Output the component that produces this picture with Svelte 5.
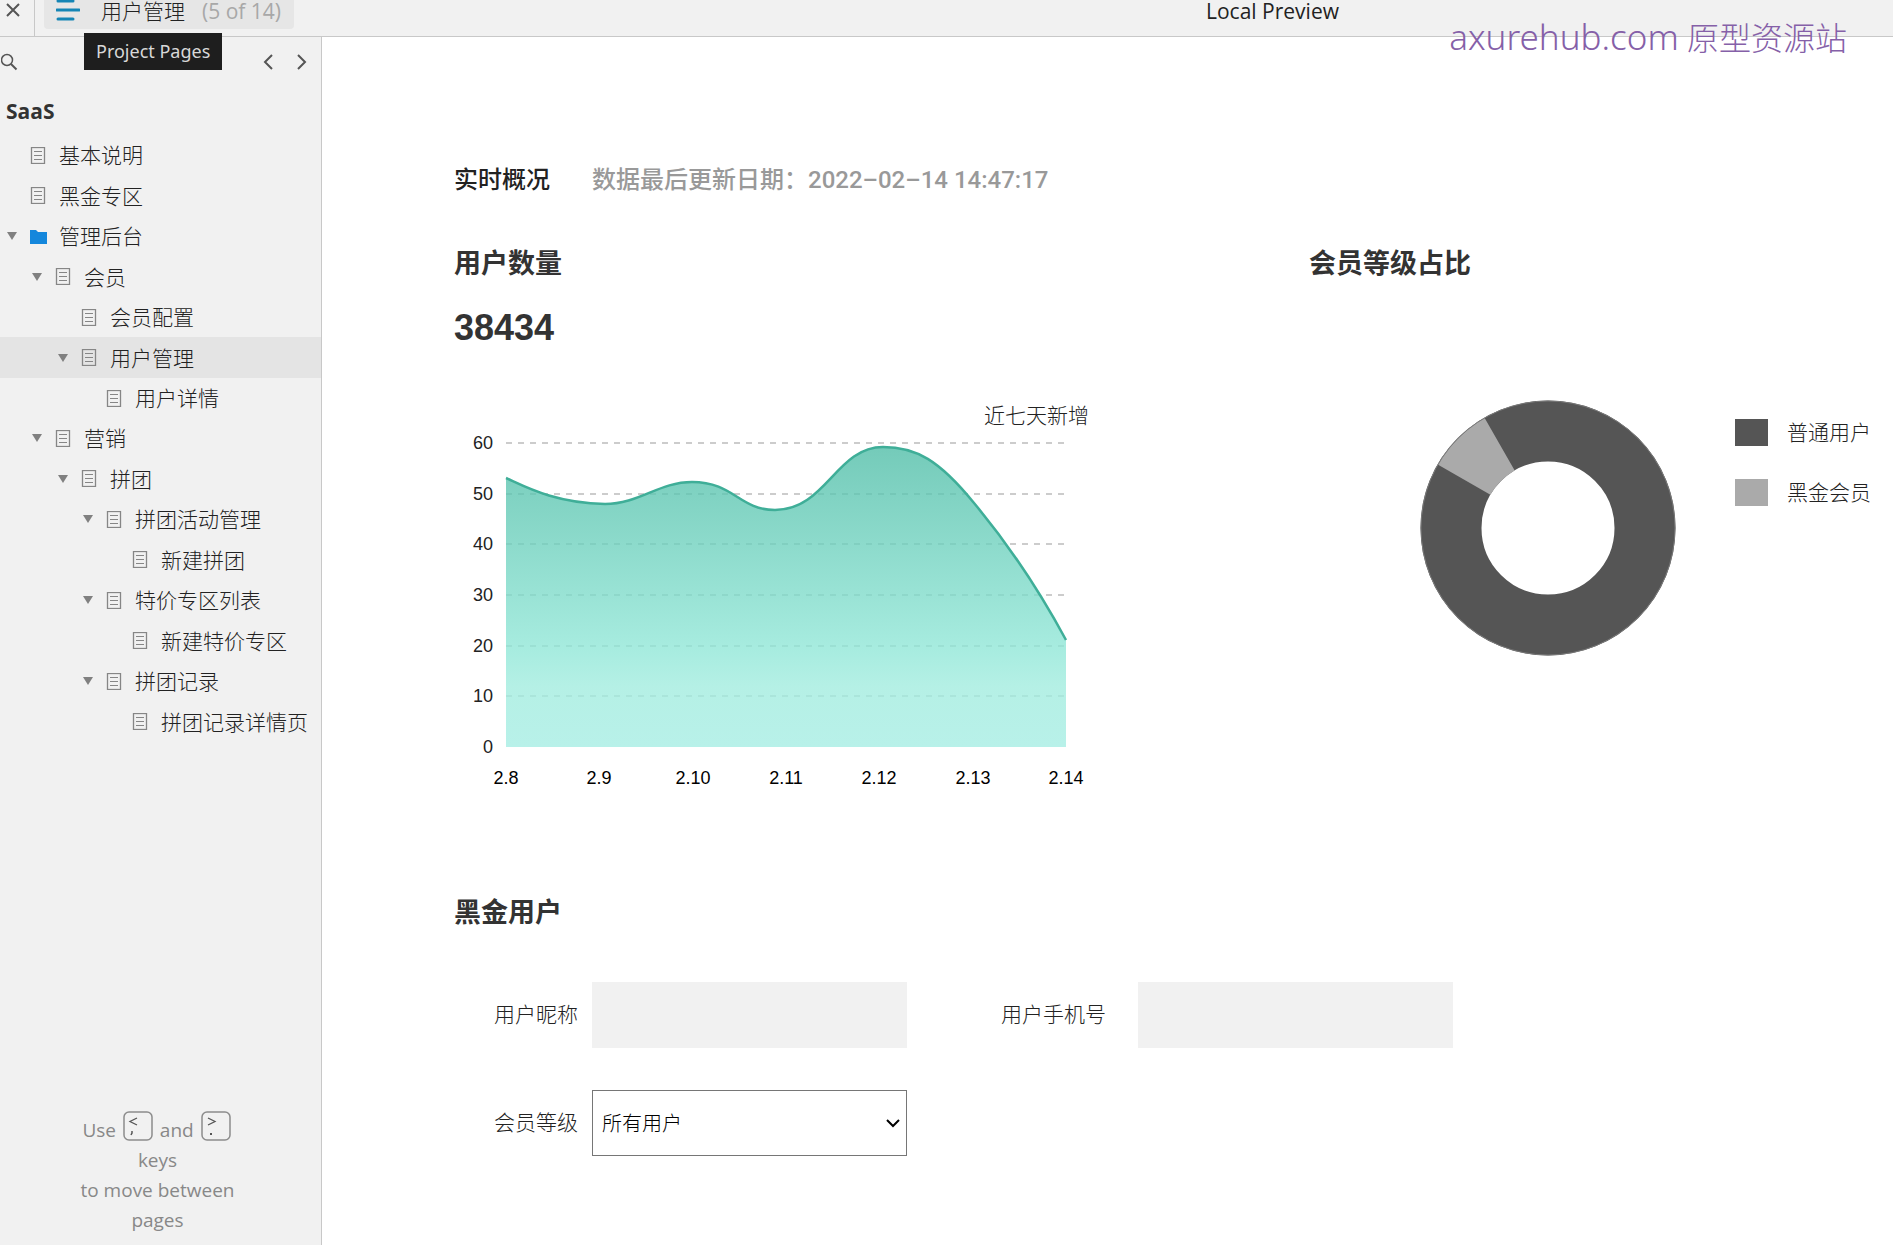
<script lang="ts">
    type Page = { name: string; level: number; open?: boolean; folder?: boolean };

    const pages: Page[] = [
        { name: '基本说明', level: 0 },
        { name: '黑金专区', level: 0 },
        { name: '管理后台', level: 0, open: true, folder: true },
        { name: '会员', level: 1, open: true },
        { name: '会员配置', level: 2 },
        { name: '用户管理', level: 2, open: true },
        { name: '用户详情', level: 3 },
        { name: '营销', level: 1, open: true },
        { name: '拼团', level: 2, open: true },
        { name: '拼团活动管理', level: 3, open: true },
        { name: '新建拼团', level: 4 },
        { name: '特价专区列表', level: 3, open: true },
        { name: '新建特价专区', level: 4 },
        { name: '拼团记录', level: 3, open: true },
        { name: '拼团记录详情页', level: 4 }
    ];

    const days = ['2.8', '2.9', '2.10', '2.11', '2.12', '2.13', '2.14'];
    const ticks = [60, 50, 40, 30, 20, 10, 0];
    const curve =
        'M52 78C70 86 100 103 151 104C185 104 205 82 238 82C280 82 285 110 321 110C372 110 382 47 429 47C462 47 485 60 520 103C555 145 585 190 612 240';

    const legend = [
        { label: '普通用户', color: '#555555' },
        { label: '黑金会员', color: '#aaaaaa' }
    ];

    let current = $state(5);
    let nickname = $state('');
    let phone = $state('');
    let grade = $state('all');

    // position of a value on the chart's y axis
    function yPos(value: number) {
        return Math.round(347 - (value / 60) * 304);
    }

    function xPos(index: number) {
        return Math.round(52 + (index * 560) / 6);
    }

    function indent(level: number) {
        return Math.round(level * 25.4) + 6;
    }

    function step(delta: number) {
        current = Math.min(pages.length - 1, Math.max(0, current + delta));
    }
</script>

<div class="app">
    <header class="topbar">
        <button class="close" aria-label="Close">
            <svg width="14" height="14" viewBox="0 0 14 14">
                <path d="M1 1L13 13M13 1L1 13" stroke="#555" stroke-width="2" />
            </svg>
        </button>
        <button class="current-page">
            <svg class="menu-icon" width="24" height="24" viewBox="0 0 24 24">
                <path d="M2 3H17M1 12H23M2 21H17" stroke="#1585b5" stroke-width="3" stroke-linecap="round" />
            </svg>
            <span>用户管理</span>
            <span class="count">(5 of 14)</span>
        </button>
        <span class="preview">Local Preview</span>
        <div class="tooltip">Project Pages</div>
        <div class="watermark"><span class="domain">axurehub.com</span> 原型资源站</div>
    </header>

    <div class="body">
        <aside class="sidebar">
            <div class="tools">
                <button aria-label="Search">
                    <svg width="18" height="18" viewBox="0 0 18 18" fill="none" stroke="#555">
                        <circle cx="6" cy="7" r="5.500" stroke-width="1.500" />
                        <path d="M10 11L15.500 16.500" stroke-width="2" />
                    </svg>
                </button>
                <div class="arrows">
                    <button aria-label="Previous page" onclick={() => step(-1)}>
                        <svg width="12" height="18" viewBox="0 0 12 18" fill="none" stroke="#555" stroke-width="2">
                            <path d="M9 2L2 9L9 16" />
                        </svg>
                    </button>
                    <button aria-label="Next page" onclick={() => step(1)}>
                        <svg width="12" height="18" viewBox="0 0 12 18" fill="none" stroke="#555" stroke-width="2">
                            <path d="M3 2L10 9L3 16" />
                        </svg>
                    </button>
                </div>
            </div>
            <h2>SaaS</h2>
            <ul class="tree">
                {#each pages as page, i}
                    <li class:active={i === current}>
                        <button style="padding-left: {indent(page.level)}px" onclick={() => (current = i)}>
                            <svg class="caret" width="12" height="8" viewBox="0 0 12 8">
                                {#if page.open}
                                    <path d="M1 0H11L6 8Z" fill="#808080" />
                                {/if}
                            </svg>
                            {#if page.folder}
                                <svg width="17" height="17" viewBox="0 0 17 17">
                                    <path d="M0 2H6L8 4H17V16H0Z" fill="#1487dc" />
                                </svg>
                            {:else}
                                <svg width="17" height="17" viewBox="0 0 17 17" fill="none" stroke="#868686">
                                    <rect x="1.500" y=".5" width="13" height="16" stroke-width="1.300" />
                                    <path d="M4 4.500H12M4 8.500H12M4 12.500H12" />
                                </svg>
                            {/if}
                            <span>{page.name}</span>
                        </button>
                    </li>
                {/each}
            </ul>
            <p class="hint">
                Use
                <svg width="30" height="30" viewBox="0 0 30 30">
                    <rect x="1" y="1" width="28" height="28" rx="5" fill="none" stroke="#8c8c8c" stroke-width="1.500" />
                    <path d="M14 7L7 10.500L14 14" fill="none" stroke="#555" stroke-width="1.300" />
                    <path d="M9 20V22L8 24" fill="none" stroke="#555" stroke-width="1.500" />
                </svg>
                and
                <svg width="30" height="30" viewBox="0 0 30 30">
                    <rect x="1" y="1" width="28" height="28" rx="5" fill="none" stroke="#8c8c8c" stroke-width="1.500" />
                    <path d="M7 7L14 10.500L7 14" fill="none" stroke="#555" stroke-width="1.300" />
                    <rect x="9" y="22" width="2" height="2" fill="#555" />
                </svg>
                <br />keys<br />to move between<br />pages
            </p>
        </aside>

        <main>
            <div class="overview">
                <span>实时概况</span>
                <span class="updated">数据最后更新日期：2022–02–14 14:47:17</span>
            </div>

            <div class="stats">
                <section>
                    <h3>用户数量</h3>
                    <div class="total">38434</div>
                    <svg class="chart" width="640" height="396" viewBox="0 0 640 396">
                        <defs>
                            <linearGradient id="area" x1="0" y1="0" x2="0" y2="1">
                                <stop offset="0" stop-color="#4dbca6" />
                                <stop offset=".35" stop-color="#6fd2bf" />
                                <stop offset=".68" stop-color="#8fe7d7" />
                                <stop offset=".8" stop-color="#a0ecde" />
                                <stop offset="1" stop-color="#a4ede3" />
                            </linearGradient>
                        </defs>
                        <text class="caption" x="635" y="23" text-anchor="end">近七天新增</text>
                        {#each ticks as tick}
                            <text class="axis" x="39" y={yPos(tick) + 6} text-anchor="end">{tick}</text>
                            {#if tick > 0}
                                <line x1="52" x2="612" y1={yPos(tick)} y2={yPos(tick)} class="grid-line" />
                            {/if}
                        {/each}
                        <path d="{curve}V347H52Z" fill="url(#area)" fill-opacity=".78" />
                        <path d={curve} fill="none" stroke="#3fae98" stroke-width="2.500" />
                        {#each days as day, i}
                            <text class="axis day" x={xPos(i)} y="384" text-anchor="middle">{day}</text>
                        {/each}
                    </svg>
                </section>

                <section>
                    <h3>会员等级占比</h3>
                    <div class="share">
                        <svg width="256" height="256" viewBox="-128 -128 256 256">
                            <circle r="97" fill="none" stroke="#555" stroke-width="61" />
                            <path d="M-110.300 -63.500A127 127 0 0 1 -63.500 -110.300L-33.300 -57.600A66.500 66.500 0 0 0 -57.600 -33.300Z" fill="#aaa" />
                            <circle r="127" fill="none" stroke="#797979" />
                        </svg>
                        <ul class="legend">
                            {#each legend as item}
                                <li>
                                    <i style="background: {item.color}"></i>
                                    <span>{item.label}</span>
                                </li>
                            {/each}
                        </ul>
                    </div>
                </section>
            </div>

            <h3 class="form-title">黑金用户</h3>
            <form class="filters">
                <label for="nickname">用户昵称</label>
                <input id="nickname" type="text" bind:value={nickname} />
                <label for="phone" class="second">用户手机号</label>
                <input id="phone" type="text" bind:value={phone} />
                <label for="grade">会员等级</label>
                <div class="select">
                    <select id="grade" bind:value={grade}>
                        <option value="all">所有用户</option>
                        <option value="normal">普通用户</option>
                        <option value="gold">黑金会员</option>
                    </select>
                    <svg width="14" height="9" viewBox="0 0 14 9">
                        <path d="M1 1L7 7L13 1" fill="none" stroke="#000" stroke-width="2" />
                    </svg>
                </div>
            </form>
        </main>
    </div>
</div>

<style>
    :global(body) {
        margin: 0;
    }

    .app {
        display: flex;
        flex-direction: column;
        min-height: 100vh;
        background: #fff;
        color: #222;
        font-family: 'Open Sans', 'Noto Sans CJK SC', sans-serif;
        font-size: 21px;
        font-weight: 300;
    }

    button {
        padding: 0;
        border: none;
        background: none;
        color: inherit;
        font: inherit;
        cursor: pointer;
    }

    svg {
        display: block;
        flex: none;
    }

    ul {
        margin: 0;
        padding: 0;
        list-style: none;
    }

    .topbar {
        position: relative;
        display: flex;
        align-items: flex-start;
        height: 36px;
        border-bottom: 1px solid #c8c8c8;
        background: #f1f1f1;
    }

    .close {
        width: 35px;
        height: 36px;
        padding: 3px 0 0 6px;
        box-sizing: border-box;
        border-right: 1px solid #c8c8c8;
        display: flex;
    }

    .current-page {
        display: flex;
        align-items: center;
        width: 250px;
        height: 29px;
        margin-left: 9px;
        padding: 0 0 6px 12px;
        box-sizing: border-box;
        border-radius: 0 0 4px 4px;
        background: #e6e6e6;
        line-height: 23px;
        white-space: nowrap;
    }

    .menu-icon {
        margin: -3px 21px 0 0;
    }

    .count {
        margin-left: 17px;
        color: #a8a8a8;
        font-weight: 400;
    }

    .preview {
        margin-left: 912px;
        font-weight: 400;
        line-height: 23px;
    }

    .tooltip {
        position: absolute;
        top: 33px;
        left: 84px;
        padding: 0 12px;
        background: #1e1e1e;
        color: #d8d8d8;
        font-family: 'Noto Sans', sans-serif;
        font-size: 18px;
        font-weight: 400;
        line-height: 37px;
        z-index: 2;
    }

    .watermark {
        position: absolute;
        top: 14px;
        right: 46px;
        color: #8560a8;
        font-family: 'Noto Sans', 'Noto Sans CJK SC', sans-serif;
        font-size: 32px;
        line-height: 46px;
        z-index: 2;
    }

    .domain {
        font-size: 35px;
    }

    .body {
        display: flex;
        flex: 1;
    }

    .sidebar {
        display: flex;
        flex-direction: column;
        width: 321px;
        border-right: 1px solid #c8c8c8;
        background: #f1f1f1;
    }

    .tools {
        display: flex;
        justify-content: space-between;
        padding: 16px 14px 0 1px;
    }

    .arrows {
        display: flex;
        gap: 20px;
    }

    .sidebar h2 {
        margin: 26px 0 10px;
        padding-left: 6px;
        color: #333;
        font-size: 21px;
        font-weight: 700;
        line-height: 28px;
    }

    .tree {
        display: grid;
        grid-auto-rows: 1fr;
        min-height: 607px;
    }

    .tree li {
        display: grid;
    }

    .tree li.active {
        background: #e4e4e4;
    }

    .tree button {
        display: flex;
        align-items: center;
        line-height: 32px;
        text-align: left;
    }

    .caret {
        margin-right: 12px;
    }

    .tree span {
        margin-left: 12px;
    }

    .hint {
        margin: auto 0 10px;
        padding-right: 6px;
        color: #888;
        font-size: 19px;
        font-weight: 400;
        line-height: 30px;
        text-align: center;
    }

    .hint svg {
        display: inline-block;
        margin: 0 2px;
        vertical-align: -4px;
    }

    main {
        flex: 1;
        padding: 125px 0 0 132px;
    }

    .overview {
        display: flex;
        gap: 42px;
        font-family: Roboto, 'Noto Sans CJK SC', sans-serif;
        font-size: 24px;
        font-weight: 500;
        line-height: 36px;
    }

    .updated {
        color: #999;
    }

    .stats {
        display: grid;
        grid-template-columns: 855fr 584fr;
        margin-top: 47px;
    }

    h3 {
        margin: 0;
        color: #333;
        font-size: 27px;
        font-weight: 700;
        line-height: 36px;
    }

    .total {
        margin-top: 25px;
        color: #333;
        font-family: 'Liberation Sans', sans-serif;
        font-size: 36px;
        font-weight: 700;
        line-height: 44px;
    }

    .chart {
        margin-top: 50px;
    }

    .caption {
        fill: #222;
        font-size: 21px;
    }

    .axis {
        fill: #222;
        font-family: 'Liberation Sans', sans-serif;
        font-size: 18px;
        font-weight: 400;
    }

    .day {
        fill: #000;
    }

    .grid-line {
        stroke: #ccc;
        stroke-width: 2;
        stroke-dasharray: 6 6;
    }

    .share {
        display: flex;
        margin: 119px 0 0 111px;
    }

    .legend {
        display: grid;
        align-content: start;
        gap: 24px;
        padding: 14px 0 0 59px;
    }

    .legend li {
        display: flex;
        align-items: center;
        gap: 19px;
        line-height: 36px;
        white-space: nowrap;
    }

    .legend i {
        width: 33px;
        height: 27px;
    }

    .form-title {
        margin: 98px 0 52px;
    }

    .filters {
        display: grid;
        grid-template-columns: 124px 315px 203px 315px;
        column-gap: 14px;
        row-gap: 42px;
        align-items: center;
    }

    .filters label {
        padding-bottom: 4px;
        text-align: right;
    }

    .filters .second {
        padding-right: 18px;
    }

    input,
    select {
        width: 100%;
        height: 66px;
        box-sizing: border-box;
        border: none;
        border-radius: 0;
        background: #f1f1f1;
        padding: 0 9px;
        color: #000;
        font: inherit;
    }

    .select {
        position: relative;
    }

    select {
        appearance: none;
        border: 1px solid #767676;
        background: #fff;
        font-size: 20px;
    }

    .select svg {
        position: absolute;
        top: 29px;
        right: 7px;
        pointer-events: none;
    }
</style>
